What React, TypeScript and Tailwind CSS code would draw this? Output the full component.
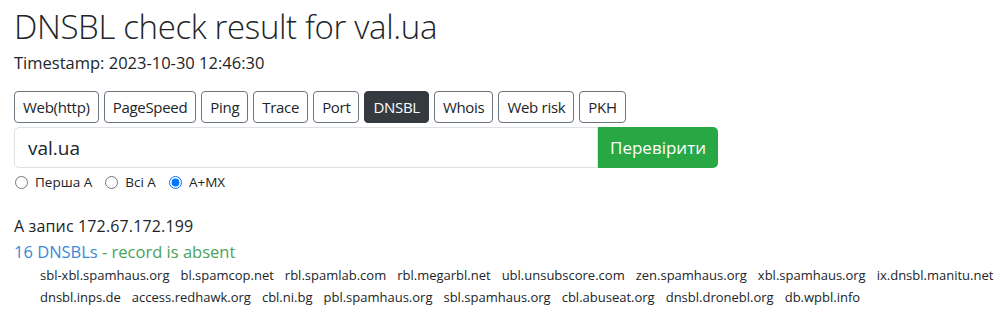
import React, { useState } from "react";

const tools = ["Web(http)", "PageSpeed", "Ping", "Trace", "Port", "DNSBL", "Whois", "Web risk", "PKH"];

const rows = [
  [
    "sbl-xbl.spamhaus.org",
    "bl.spamcop.net",
    "rbl.spamlab.com",
    "rbl.megarbl.net",
    "ubl.unsubscore.com",
    "zen.spamhaus.org",
    "xbl.spamhaus.org",
    "ix.dnsbl.manitu.net",
  ],
  [
    "dnsbl.inps.de",
    "access.redhawk.org",
    "cbl.ni.bg",
    "pbl.spamhaus.org",
    "sbl.spamhaus.org",
    "cbl.abuseat.org",
    "dnsbl.dronebl.org",
    "db.wpbl.info",
  ],
];

export default function App() {
  const [mode, setMode] = useState("amx");
  const [host, setHost] = useState("val.ua");

  return (
    <div
      className="min-h-screen bg-white px-[14px] pt-[5px] text-[#212529]"
      style={{ fontFamily: '"Open Sans", "Noto Sans", sans-serif' }}
    >
      <h1 className="text-[33px] font-light leading-[44px] tracking-[-0.35px]">DNSBL check result for val.ua</h1>
      <p className="mt-[2px] text-[16.5px] leading-[24px]">Timestamp: 2023-10-30 12:46:30</p>

      <div className="mt-[16px] flex gap-[5px]">
        {tools.map((t) => (
          <button
            key={t}
            className={
              t === "DNSBL"
                ? "h-[32px] rounded-[4px] border border-[#343a40] bg-[#343a40] px-[8px] text-[15px] tracking-[-0.3px] text-white"
                : "h-[32px] rounded-[4px] border border-[#6c757d] bg-white px-[8px] text-[15px] tracking-[-0.3px] text-[#212529]"
            }
          >
            {t}
          </button>
        ))}
      </div>

      <div className="mt-[4px] flex w-[704px]">
        <input
          value={host}
          onChange={(e) => setHost(e.target.value)}
          className="h-[41px] flex-1 rounded-l-[5px] border border-[#dee2e6] px-[13px] text-[19px] outline-none"
        />
        <button className="h-[41px] w-[120px] rounded-r-[5px] bg-[#28a745] text-[17px] text-white">Перевірити</button>
      </div>

      <div className="mt-[4px] flex items-center text-[13.5px] leading-[20px]">
        {[
          ["first", "Перша A"],
          ["all", "Всі A"],
          ["amx", "A+MX"],
        ].map(([k, label]) => (
          <label key={k} className="mr-[12px] flex items-center gap-[7px]">
            <input
              type="radio"
              name="mode"
              checked={mode === k}
              onChange={() => setMode(k)}
              className="m-0 ml-[1px] h-[13px] w-[13px] accent-[#0075ff]"
            />
            {label}
          </label>
        ))}
      </div>

      <p className="mt-[22px] text-[16px] leading-[24px] tracking-[0.15px]">A запис 172.67.172.199</p>
      <p className="mt-[2px] text-[16.5px] leading-[24px]">
        <span className="text-[#3a8ad6]">16 DNSBLs</span>
        <span className="text-[#4aa35a]"> - record is absent</span>
      </p>
      <div className="pl-[26px] text-[13px] leading-[22px]">
        {rows.map((r, i) => (
          <div key={i} className="flex gap-[11px] whitespace-nowrap">
            {r.map((d) => (
              <span key={d}>{d}</span>
            ))}
          </div>
        ))}
      </div>
    </div>
  );
}
